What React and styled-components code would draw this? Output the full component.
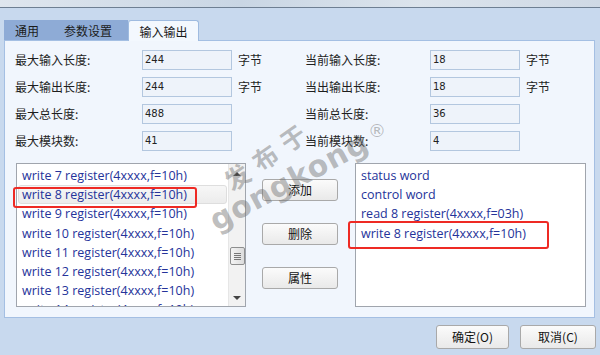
import React from 'react'
import styled, { createGlobalStyle } from 'styled-components'

const GlobalStyle = createGlobalStyle`
  html, body {
    margin: 0;
    padding: 0;
    background: #c8d9ee;
  }
  body {
    font-family: "Noto Sans CJK SC", "Noto Sans", sans-serif;
    width: 600px;
    height: 355px;
    overflow: hidden;
  }
`

const leftRows = [
  { label: '最大输入长度:', value: '244', unit: '字节' },
  { label: '最大输出长度:', value: '244', unit: '字节' },
  { label: '最大总长度:', value: '488' },
  { label: '最大模块数:', value: '41' },
]

const rightRows = [
  { label: '当前输入长度:', value: '18', unit: '字节' },
  { label: '当出输出长度:', value: '18', unit: '字节' },
  { label: '当前总长度:', value: '36' },
  { label: '当前模块数:', value: '4' },
]

const available = [
  'write 7 register(4xxxx,f=10h)',
  'write 8 register(4xxxx,f=10h)',
  'write 9 register(4xxxx,f=10h)',
  'write 10 register(4xxxx,f=10h)',
  'write 11 register(4xxxx,f=10h)',
  'write 12 register(4xxxx,f=10h)',
  'write 13 register(4xxxx,f=10h)',
  'write 14 register(4xxxx,f=10h)',
]

const chosen = [
  'status word',
  'control word',
  'read 8 register(4xxxx,f=03h)',
  'write 8 register(4xxxx,f=10h)',
]

export default function App() {
  return (
    <Window>
      <GlobalStyle />
      <TitleStrip />
      <Body>
        <TabBar>
          <InactiveTabs>
            <Tab $pad="0 25px 0 11px">通用</Tab>
            <Tab $pad="0">参数设置</Tab>
          </InactiveTabs>
          <ActiveTab>输入输出</ActiveTab>
        </TabBar>
        <Panel>
          <Form>
            <FieldGroup $label={127} $w={290}>
              {leftRows.map((r) => (
                <Field key={r.label}>
                  <Label>{r.label}</Label>
                  <ValueBox>{r.value}</ValueBox>
                  <Unit>{r.unit}</Unit>
                </Field>
              ))}
            </FieldGroup>
            <FieldGroup $label={125} $w={280}>
              {rightRows.map((r) => (
                <Field key={r.label}>
                  <Label>{r.label}</Label>
                  <ValueBox>{r.value}</ValueBox>
                  <Unit>{r.unit}</Unit>
                </Field>
              ))}
            </FieldGroup>
          </Form>
          <Lower>
            <ListWrap $w={230}>
              <ListBox>
                <Items>
                  {available.map((t, i) => (
                    <Item key={t} $hover={i === 1}>{t}</Item>
                  ))}
                </Items>
                <ScrollBar>
                  <Arrow $dir="up" />
                  <Thumb>
                    <Grip />
                  </Thumb>
                  <Arrow $dir="down" />
                </ScrollBar>
              </ListBox>
              <RedMark $l={-3} $t={24} $w={184} $h={21} />
            </ListWrap>
            <ButtonCol>
              <Button>添加</Button>
              <Button>删除</Button>
              <Button>属性</Button>
            </ButtonCol>
            <ListWrap $w={231}>
              <ListBox>
                <Items>
                  {chosen.map((t) => (
                    <Item key={t}>{t}</Item>
                  ))}
                </Items>
              </ListBox>
              <RedMark $l={-7} $t={58} $w={201} $h={28} />
            </ListWrap>
          </Lower>
        </Panel>
        <Footer>
          <FooterButton $w={73}>确定(O)</FooterButton>
          <FooterButton $w={76}>取消(C)</FooterButton>
        </Footer>
      </Body>
      <WmTop>发布于</WmTop>
      <WmBrand>gongkong</WmBrand>
      <WmReg>®</WmReg>
    </Window>
  )
}

const Window = styled.div`
  position: relative;
  width: 600px;
  height: 355px;
  background: #c8d9ee;
  overflow: hidden;
`

const TitleStrip = styled.div`
  height: 7px;
  background: linear-gradient(to right, #dfe6ee, #c9d6e4 40%, #dce4ec 70%, #cfd9e5);
  border-bottom: 1px solid #6e7f92;
`

const Body = styled.div`
  padding: 12px 5px 0 4px;
`

const TabBar = styled.div`
  display: flex;
  height: 20px;
  font-size: 12px;
  color: #1b1b1b;
`

const InactiveTabs = styled.div`
  display: flex;
  width: 124px;
  background: #8eabd6;
`

const Tab = styled.div`
  padding: ${(p) => p.$pad};
  height: 20px;
  display: flex;
  align-items: center;
`

const ActiveTab = styled.div`
  width: 71px;
  box-sizing: border-box;
  background: #f3f8fe;
  border: 1px solid #9fbbe0;
  border-bottom: none;
  border-radius: 3px 3px 0 0;
  display: flex;
  align-items: center;
  justify-content: center;
  margin-bottom: -1px;
  position: relative;
  z-index: 1;
`

const Panel = styled.div`
  box-sizing: border-box;
  width: 591px;
  height: 278px;
  background: #f1f6fd;
  border: 1px solid #a4bfe3;
  padding: 9px 8px 0 10px;
`

const Form = styled.div`
  display: flex;
`

const FieldGroup = styled.div`
  display: grid;
  grid-template-columns: ${(p) => p.$label}px 90px 1fr;
  row-gap: 7px;
  width: ${(p) => p.$w}px;
`

const Field = styled.div`
  display: contents;
`

const Label = styled.div`
  font-size: 12px;
  line-height: 20px;
  color: #1e1e1e;
`

const ValueBox = styled.div`
  box-sizing: border-box;
  height: 20px;
  background: #eef3fa;
  border: 1px solid #b3c7df;
  font-family: "DejaVu Sans", sans-serif;
  font-size: 10px;
  line-height: 18px;
  padding-left: 2px;
  color: #222;
`

const Unit = styled.div`
  font-size: 12px;
  line-height: 20px;
  padding-left: 6px;
  color: #1e1e1e;
`

const Lower = styled.div`
  display: flex;
  margin-top: 12px;
  padding-left: 1px;
`

const ListWrap = styled.div`
  position: relative;
  width: ${(p) => p.$w}px;
  height: 144px;
`

const ListBox = styled.div`
  box-sizing: border-box;
  height: 100%;
  background: #fff;
  border: 1px solid #a0a5ad;
  display: flex;
  overflow: hidden;
`

const Items = styled.div`
  flex: 1;
  padding: 2px 1px 0 1px;
`

const Item = styled.div`
  box-sizing: border-box;
  height: 19.2px;
  line-height: 17px;
  padding-left: 3px;
  font-family: "Open Sans", "Noto Sans", sans-serif;
  font-size: 12.5px;
  color: #25339a;
  white-space: nowrap;
  border-radius: 3px;
  border: 1px solid ${(p) => (p.$hover ? '#dedede' : 'transparent')};
  background: ${(p) => (p.$hover ? 'linear-gradient(#f7f7f7, #ececec)' : 'transparent')};
`

const ScrollBar = styled.div`
  width: 17px;
  background: #f2f2f2;
  border-left: 1px solid #e6e6e6;
  display: flex;
  flex-direction: column;
  align-items: center;
  padding: 8px 0 6px;
  box-sizing: border-box;
`

const Arrow = styled.div`
  width: 0;
  height: 0;
  border-left: 4px solid transparent;
  border-right: 4px solid transparent;
  ${(p) =>
    p.$dir === 'up'
      ? 'border-bottom: 4px solid #444;'
      : 'border-top: 4px solid #444;'}
`

const Thumb = styled.div`
  box-sizing: border-box;
  width: 15px;
  height: 18px;
  margin-top: 71px;
  margin-bottom: auto;
  border: 1px solid #8e8f8f;
  border-radius: 2px;
  background: linear-gradient(to right, #f4f4f4, #dcdcdc);
  display: flex;
  align-items: center;
  justify-content: center;
`

const Grip = styled.div`
  width: 7px;
  height: 7px;
  background: repeating-linear-gradient(#777 0 1px, transparent 1px 2px);
`

const RedMark = styled.div`
  position: absolute;
  left: ${(p) => p.$l}px;
  top: ${(p) => p.$t}px;
  width: ${(p) => p.$w}px;
  height: ${(p) => p.$h}px;
  box-sizing: border-box;
  border: 2px solid #ee2a24;
  border-radius: 3px;
`

const ButtonCol = styled.div`
  width: 76px;
  margin: 0 17px 0 16px;
  padding-top: 16px;
  display: flex;
  flex-direction: column;
  gap: 22px;
`

const Button = styled.div`
  box-sizing: border-box;
  height: 22px;
  border: 1px solid #a9a9a9;
  border-radius: 3px;
  background: linear-gradient(#fbfbfb, #e9e9e9);
  font-size: 12px;
  line-height: 20px;
  text-align: center;
  color: #111;
`

const Footer = styled.div`
  display: flex;
  justify-content: flex-end;
  gap: 11px;
  padding: 7px 0 0;
  margin-right: -1px;
`

const FooterButton = styled(Button)`
  width: ${(p) => p.$w}px;
  height: 24px;
  line-height: 22px;
`

const WmText = styled.div`
  position: absolute;
  white-space: nowrap;
  pointer-events: none;
  color: rgba(110, 110, 110, 0.45);
  font-weight: bold;
  transform: translate(-50%, -50%) rotate(${(p) => p.$rot}deg);
`

const WmTop = styled(WmText).attrs({ $rot: -35 })`
  left: 268px;
  top: 154px;
  font-size: 25px;
  letter-spacing: 9px;
`

const WmBrand = styled(WmText).attrs({ $rot: -28 })`
  left: 289px;
  top: 181px;
  font-family: "DejaVu Sans", sans-serif;
  font-size: 30px;
  letter-spacing: 1px;
`

const WmReg = styled(WmText).attrs({ $rot: 0 })`
  left: 377px;
  top: 130px;
  font-family: "DejaVu Sans", sans-serif;
  font-size: 18px;
  font-weight: normal;
`
